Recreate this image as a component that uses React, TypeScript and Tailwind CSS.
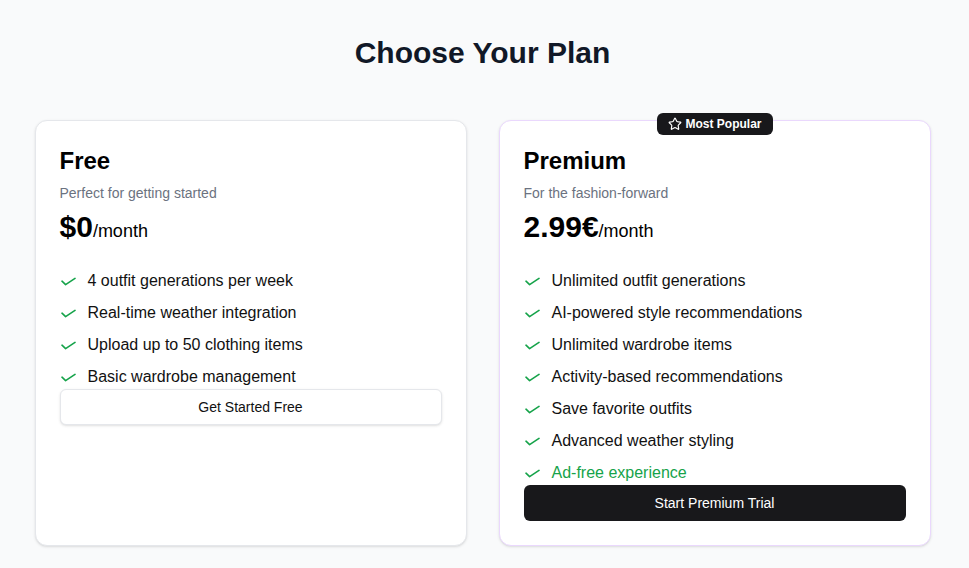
import React from "react";
import { Star } from "lucide-react";

type Plan = {
  name: string;
  tagline: string;
  price: string;
  features: string[];
  highlightLast?: boolean;
  cta: string;
  popular?: boolean;
};

const plans: Plan[] = [
  {
    name: "Free",
    tagline: "Perfect for getting started",
    price: "$0",
    features: [
      "4 outfit generations per week",
      "Real-time weather integration",
      "Upload up to 50 clothing items",
      "Basic wardrobe management",
    ],
    cta: "Get Started Free",
  },
  {
    name: "Premium",
    tagline: "For the fashion-forward",
    price: "2.99€",
    features: [
      "Unlimited outfit generations",
      "AI-powered style recommendations",
      "Unlimited wardrobe items",
      "Activity-based recommendations",
      "Save favorite outfits",
      "Advanced weather styling",
      "Ad-free experience",
    ],
    highlightLast: true,
    cta: "Start Premium Trial",
    popular: true,
  },
];

// Wide, shallow tick used in the feature lists
function Tick() {
  return (
    <svg
      viewBox="0 0 16 16"
      className="h-4 w-4 shrink-0"
      fill="none"
      stroke="#16a34a"
      strokeWidth={1.6}
      strokeLinecap="round"
      strokeLinejoin="round"
    >
      <path d="M2 8.2 5.6 11.6 15 5.4" />
    </svg>
  );
}

function PlanCard({ plan }: { plan: Plan }) {
  return (
    <div
      className={`relative flex flex-col rounded-xl border bg-white px-6 pt-6 pb-6 shadow-sm ${
        plan.popular ? "border-[#ead8fd]" : "border-[#e5e7eb]"
      }`}
    >
      {plan.popular && (
        <div className="absolute left-1/2 top-[-8px] flex h-[22px] -translate-x-1/2 items-center gap-1 rounded-md bg-[#18181b] px-[11px] text-xs font-bold text-white">
          <Star className="h-[14px] w-[14px]" strokeWidth={2} />
          <span>Most Popular</span>
        </div>
      )}
      <h2 className="text-2xl leading-8 font-bold text-black">{plan.name}</h2>
      <p className="mt-1.5 text-sm leading-5 text-[#6b7280]">{plan.tagline}</p>
      <div className="mt-1.5 flex items-baseline text-black">
        <span className="text-3xl leading-9 font-bold">{plan.price}</span>
        <span className="text-lg">/month</span>
      </div>
      <ul className="mt-6 flex flex-col gap-2">
        {plan.features.map((f, i) => {
          const hl = plan.highlightLast && i === plan.features.length - 1;
          return (
            <li key={f} className="flex h-6 items-center gap-3 text-base">
              <Tick />
              <span className={hl ? "text-[#16a34a]" : "text-[#111111]"}>{f}</span>
            </li>
          );
        })}
      </ul>
      {plan.popular ? (
        <button className="flex h-9 w-full items-center justify-center rounded-md bg-[#18181b] text-sm text-white">
          {plan.cta}
        </button>
      ) : (
        <button className="flex h-9 w-full items-center justify-center rounded-md border border-[#e5e7eb] bg-white text-sm text-[#111111] shadow-sm">
          {plan.cta}
        </button>
      )}
    </div>
  );
}

export default function App() {
  return (
    <div
      className="min-h-[568px] bg-[#f9fafb] pt-[35px] pr-[4px]"
      style={{ fontFamily: '"Liberation Sans", Arial, sans-serif' }}
    >
      <h1 className="text-center text-3xl leading-9 font-bold text-[#111827]">
        Choose Your Plan
      </h1>
      <div className="mx-auto mt-[49px] grid w-[896px] grid-cols-2 gap-8">
        {plans.map((p) => (
          <PlanCard key={p.name} plan={p} />
        ))}
      </div>
    </div>
  );
}
